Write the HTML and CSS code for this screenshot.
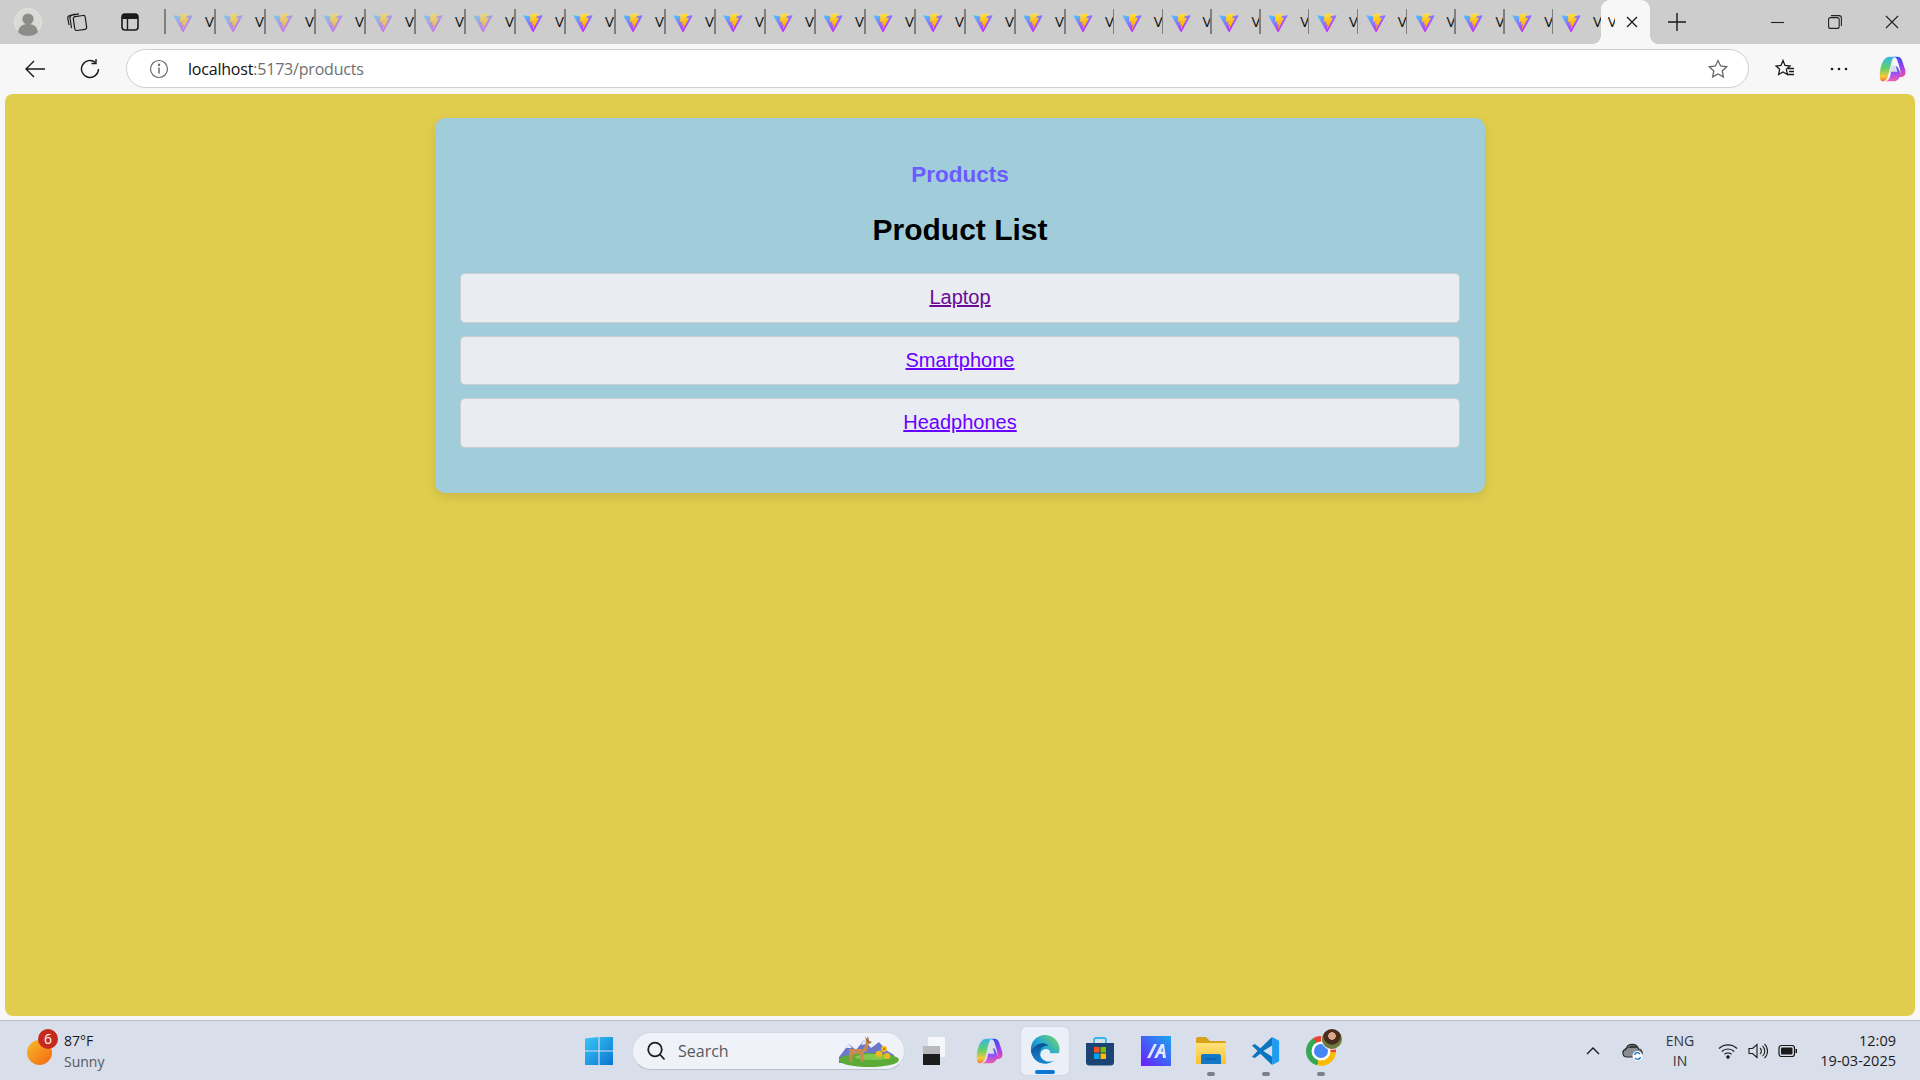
FILE: index.html
```html
<!DOCTYPE html>
<html lang="en">
<head>
<meta charset="utf-8">
<title>Products</title>
<link rel="stylesheet" href="styles.css">
</head>
<body>
<svg class="defs" aria-hidden="true">
  <defs>
    <linearGradient id="vg1" gradientUnits="userSpaceOnUse" x1="6" y1="33" x2="235" y2="344"><stop offset="0" stop-color="#41d1ff"/><stop offset="1" stop-color="#bd34fe"/></linearGradient>
    <linearGradient id="vg2" gradientUnits="userSpaceOnUse" x1="195" y1="9" x2="236" y2="293"><stop offset="0" stop-color="#ffea83"/><stop offset=".08" stop-color="#ffdd35"/><stop offset="1" stop-color="#ffa800"/></linearGradient>
    <linearGradient id="edgeA" x1="0" y1="1" x2="1" y2="0"><stop offset="0" stop-color="#0c59a4"/><stop offset=".5" stop-color="#1fa6d8"/><stop offset="1" stop-color="#7fdc5a"/></linearGradient>
    <linearGradient id="edgeB" x1="0" y1="0" x2="0" y2="1"><stop offset="0" stop-color="#0a4f94"/><stop offset="1" stop-color="#1b86d6"/></linearGradient>
    <linearGradient id="maG" x1="1" y1="0" x2="0" y2="1"><stop offset="0" stop-color="#1aa7ee"/><stop offset="1" stop-color="#6a1cff"/></linearGradient>
    <linearGradient id="winG" x1="0" y1="0" x2="1" y2="1"><stop offset="0" stop-color="#39c8f5"/><stop offset="1" stop-color="#0a74d1"/></linearGradient>
    <linearGradient id="coA" x1="0" y1="0" x2="0" y2="1"><stop offset="0" stop-color="#38b6e8"/><stop offset=".45" stop-color="#5fd06a"/><stop offset=".8" stop-color="#f7c93b"/><stop offset="1" stop-color="#f7762a"/></linearGradient>
    <linearGradient id="coB" x1="0" y1="0" x2="0" y2="1"><stop offset="0" stop-color="#3050f0"/><stop offset=".5" stop-color="#9a3ff0"/><stop offset="1" stop-color="#f04fa8"/></linearGradient>
    <linearGradient id="fold" x1="0" y1="0" x2="0" y2="1"><stop offset="0" stop-color="#ffe27a"/><stop offset="1" stop-color="#fbc02d"/></linearGradient>
    <linearGradient id="sky" x1="0" y1="0" x2="1" y2="0"><stop offset="0" stop-color="#2aa3f0"/><stop offset="1" stop-color="#1cb4f5"/></linearGradient>
    <symbol id="vite" viewBox="0 0 410 404">
      <path fill="url(#vg1)" d="M399.6 59.5 215.6 388.5c-3.8 6.8-13.5 6.8-17.4.1L10.6 59.6c-4.2-7.4 2.1-16.3 10.4-14.8l184.2 32.9c1.2.2 2.4.2 3.6 0l180.3-32.9c8.3-1.5 14.7 7.3 10.5 14.7Z"/>
      <path fill="url(#vg2)" d="M293 1.6 156.8 28.3c-2.2.4-3.9 2.3-4 4.6l-8.4 141.4c-.2 3.4 2.9 5.9 6.1 5.2l37.9-8.7c3.5-.8 6.8 2.3 6 5.9l-11.3 55.1c-.8 3.7 2.7 6.9 6.4 5.8l23.4-7.1c3.6-1.1 7.1 2.1 6.4 5.8l-17.9 86.6c-1.1 5.4 6.1 8.4 9.1 3.7l2-3.1 111-221.4c1.9-3.7-1.3-7.9-5.4-7.1l-39 7.5c-3.7.7-6.8-2.7-5.8-6.3l25.5-88.3c1-3.6-2.1-7-5.8-6.3Z"/>
    </symbol>
    <symbol id="copilot" viewBox="0 0 32 32">
      <path fill="url(#coA)" d="M12 2h7c-3 1-4 3-5 7l-3 12c-1 5-3 9-7 9-2 0-3-2-3-6 0-9 3-22 11-22Z"/>
      <path fill="url(#coB)" d="M21 2c3 0 5 2 6 6l3 9c1 5-1 8-5 8h-4c4-2 4-5 3-9l-2-7c-1-4-2-6-5-7h4Z"/>
      <path fill="url(#coB)" d="M14 13h7l3 6c1 5-1 11-8 11H7c4-1 5-3 6-7Z" opacity=".9"/>
      <path fill="#d8deea" d="M14 12h5l2 7h-7l-1 4c-.6-4 0-8 1-11Z"/>
    </symbol>
  </defs>
</svg>

<div class="screen">
  <header class="tabstrip">
    <div class="strip-left">
      <div class="slot slot-avatar">
        <svg class="ico-28" viewBox="0 0 28 28"><circle cx="14" cy="14" r="13.5" fill="#d9d9d5" stroke="#e4e4e0"/><circle cx="14" cy="11" r="5.6" fill="#8d8c88"/><path d="M4 24c1-6 5-8 10-8s9 2 10 8c-3 3-6 4-10 4s-7-1-10-4Z" fill="#8d8c88"/></svg>
      </div>
      <div class="slot slot-coll">
        <svg class="ico-22" viewBox="0 0 22 22" fill="none" stroke="#1a1a1a" stroke-width="1.2"><rect x="8" y="5" width="12" height="14" rx="2" transform="rotate(-8 14 12)"/><path d="M5.5 17 4 7c-.2-1.5.6-2.6 2-2.9l7-1.2M3 14 1.8 7.5C1.6 6 2.4 4.900 3.800 4.500L9 3"/></svg>
      </div>
      <div class="slot slot-vert">
        <svg class="ico-20" viewBox="0 0 20 20"><rect x="2" y="2" width="16" height="16" rx="3" fill="none" stroke="#1a1a1a" stroke-width="1.6"/><path d="M2 5a3 3 0 0 1 3-3h10a3 3 0 0 1 3 3v2H2Z" fill="#1a1a1a"/><path d="M7.500 7v11" stroke="#1a1a1a" stroke-width="1.4"/></svg>
      </div>
    </div>
    <div class="tabs">
      <div class="tab dim"><svg class="vite"><use href="#vite"/></svg><span class="tab-t">V</span></div>
      <div class="tab dim"><svg class="vite"><use href="#vite"/></svg><span class="tab-t">V</span></div>
      <div class="tab dim"><svg class="vite"><use href="#vite"/></svg><span class="tab-t">V</span></div>
      <div class="tab dim"><svg class="vite"><use href="#vite"/></svg><span class="tab-t">V</span></div>
      <div class="tab dim"><svg class="vite"><use href="#vite"/></svg><span class="tab-t">V</span></div>
      <div class="tab dim"><svg class="vite"><use href="#vite"/></svg><span class="tab-t">V</span></div>
      <div class="tab dim"><svg class="vite"><use href="#vite"/></svg><span class="tab-t">V</span></div>
      <div class="tab"><svg class="vite"><use href="#vite"/></svg><span class="tab-t">V</span></div>
      <div class="tab"><svg class="vite"><use href="#vite"/></svg><span class="tab-t">V</span></div>
      <div class="tab"><svg class="vite"><use href="#vite"/></svg><span class="tab-t">V</span></div>
      <div class="tab"><svg class="vite"><use href="#vite"/></svg><span class="tab-t">V</span></div>
      <div class="tab"><svg class="vite"><use href="#vite"/></svg><span class="tab-t">V</span></div>
      <div class="tab"><svg class="vite"><use href="#vite"/></svg><span class="tab-t">V</span></div>
      <div class="tab"><svg class="vite"><use href="#vite"/></svg><span class="tab-t">V</span></div>
      <div class="tab"><svg class="vite"><use href="#vite"/></svg><span class="tab-t">V</span></div>
      <div class="tab"><svg class="vite"><use href="#vite"/></svg><span class="tab-t">V</span></div>
      <div class="tab"><svg class="vite"><use href="#vite"/></svg><span class="tab-t">V</span></div>
      <div class="tab"><svg class="vite"><use href="#vite"/></svg><span class="tab-t">V</span></div>
      <div class="tab narrow"><svg class="vite"><use href="#vite"/></svg><span class="tab-t">V</span></div>
      <div class="tab narrow"><svg class="vite"><use href="#vite"/></svg><span class="tab-t">V</span></div>
      <div class="tab narrow"><svg class="vite"><use href="#vite"/></svg><span class="tab-t">V</span></div>
      <div class="tab narrow"><svg class="vite"><use href="#vite"/></svg><span class="tab-t">V</span></div>
      <div class="tab narrow"><svg class="vite"><use href="#vite"/></svg><span class="tab-t">V</span></div>
      <div class="tab narrow"><svg class="vite"><use href="#vite"/></svg><span class="tab-t">V</span></div>
      <div class="tab narrow"><svg class="vite"><use href="#vite"/></svg><span class="tab-t">V</span></div>
      <div class="tab narrow"><svg class="vite"><use href="#vite"/></svg><span class="tab-t">V</span></div>
      <div class="tab narrow"><svg class="vite"><use href="#vite"/></svg><span class="tab-t">V</span></div>
      <div class="tab narrow"><svg class="vite"><use href="#vite"/></svg><span class="tab-t">V</span></div>
      <div class="tab narrow last"><svg class="vite"><use href="#vite"/></svg><span class="tab-t">V</span></div>
      <div class="tab-active"><span class="tab-clip">V</span>
        <svg class="ico-12" viewBox="0 0 12 12" stroke="#1a1a1a" stroke-width="1.3"><path d="M1 1l10 10M11 1 1 11"/></svg>
      </div>
    </div>
    <div class="slot slot-new">
      <svg class="ico-18" viewBox="0 0 18 18" stroke="#1a1a1a" stroke-width="1.4"><path d="M9 0v18M0 9h18"/></svg>
    </div>
    <div class="win-controls">
      <div class="slot slot-win"><svg class="ico-14" viewBox="0 0 14 14" stroke="#222" stroke-width="1.100"><path d="M0 7.500h13"/></svg></div>
      <div class="slot slot-win"><svg class="ico-14" viewBox="0 0 14 14" fill="none" stroke="#222" stroke-width="1.100"><rect x=".6" y="2.600" width="10.600" height="10.800" rx="2"/><path d="M3 .6h8a2.400 2.400 0 0 1 2.400 2.400v8"/></svg></div>
      <div class="slot slot-win"><svg class="ico-14" viewBox="0 0 14 14" stroke="#222" stroke-width="1.100"><path d="M1 1l12 12M13 1 1 13"/></svg></div>
    </div>
  </header>

  <nav class="toolbar">
    <div class="slot slot-back">
      <svg class="ico-20" viewBox="0 0 20 20" fill="none" stroke="#1a1a1a" stroke-width="1.4"><path d="M20 10H1M9 2l-8 8 8 8"/></svg>
    </div>
    <div class="slot slot-reload">
      <svg class="ico-20" viewBox="0 0 20 20" fill="none" stroke="#1a1a1a" stroke-width="1.400"><path d="M15.500 3.500A8.500 8.500 0 1 0 18.500 10"/><path d="M16 0v4.500h-4.500"/></svg>
    </div>
    <div class="address">
      <svg class="ico-20 addr-info" viewBox="0 0 20 20" fill="none" stroke="#6a6a6a" stroke-width="1.200"><circle cx="10" cy="10" r="8.500"/><path d="M10 8.500v6" stroke-width="1.500"/><circle cx="10" cy="5.800" r=".6" fill="#6a6a6a"/></svg>
      <div class="url"><span class="url-host">localhost</span>:5173/products</div>
      <svg class="ico-20 addr-star" viewBox="0 0 20 20" fill="none" stroke="#6a6a6a" stroke-width="1.300"><path d="M10 1.500 12.600 7l6 .8-4.400 4.100 1.200 6L10 15l-5.400 2.900 1.200-6L1.400 7.800l6-.8Z"/></svg>
    </div>
    <div class="tool-right">
      <div class="slot slot-tool"><svg class="ico-20" viewBox="0 0 20 20" fill="none" stroke="#1a1a1a" stroke-width="1.300"><path d="M8 1.500 10 6.500l5 .5-3.600 3.300 1 5.200L8 13l-4.400 2.500 1-5.200L1 7l5-.5ZM13 9.500h6M14 12.500h5M12 15.500h7"/></svg></div>
      <div class="slot slot-tool"><svg class="ico-20" viewBox="0 0 20 20" fill="#1a1a1a"><circle cx="3" cy="10" r="1.300"/><circle cx="10" cy="10" r="1.300"/><circle cx="17" cy="10" r="1.300"/></svg></div>
      <div class="slot slot-tool"><svg class="ico-28" viewBox="0 0 32 32"><use href="#copilot"/></svg></div>
    </div>
  </nav>

  <main class="viewport">
    <div class="page">
      <section class="card">
        <div class="nav-title">Products</div>
        <h2 class="list-title">Product List</h2>
        <ul class="items">
          <li class="item"><a class="link link-visited" href="#">Laptop</a></li>
          <li class="item"><a class="link" href="#">Smartphone</a></li>
          <li class="item"><a class="link" href="#">Headphones</a></li>
        </ul>
      </section>
    </div>
  </main>

  <footer class="taskbar">
    <div class="weather">
      <div class="sun"><span class="badge">6</span></div>
      <div class="weather-text">
        <div class="temp">87°F</div>
        <div class="cond">Sunny</div>
      </div>
    </div>
    <div class="start">
      <svg class="ico-30" viewBox="0 0 30 30"><path fill="url(#winG)" d="M1 2.500 14.400 1v13.400H1ZM15.600 1 29 1v13.400H15.600ZM1 15.600h13.400V29H1ZM15.600 15.600H29V29H15.600Z"/></svg>
    </div>
    <div class="search">
      <svg class="ico-20" viewBox="0 0 20 20" fill="none" stroke="#1f1f1f" stroke-width="1.800"><circle cx="9" cy="8.500" r="6.800"/><path d="m14 13.500 4.500 5"/></svg>
      <span class="search-text">Search</span>
      <svg class="deer" viewBox="0 0 62 32">
        <path d="M2 22 12 9l7 6 8-10 7 8 8-6 7 8 8 5v8H2Z" fill="#6b78c9"/>
        <path d="M12 9l3 4h-6ZM27 5l3 4-6 1Z" fill="#e8ebf6"/>
        <ellipse cx="32" cy="25" rx="30" ry="7" fill="#5cab36"/>
        <ellipse cx="36" cy="22" rx="18" ry="3" fill="#83c84a"/>
        <path d="M12 14h14c2-3 3-5 3-9l3 1-1 6c0 3-2 5-4 5l-1 10h-2l-1-8-7 0-1 8h-2l-1-9Z" fill="#c58a56"/>
        <path d="M29 5l-1-4 2 3 1-3 1 5 3 1-3 2Z" fill="#a06c3c"/>
        <g fill="#f3b81b"><circle cx="42" cy="19" r="3.300"/><circle cx="47" cy="14" r="3"/><circle cx="50" cy="21" r="3"/></g>
        <circle cx="47" cy="14" r="1" fill="#b26a10"/>
      </svg>
    </div>
    <div class="slot task-first">
      <div class="taskview"><span class="tv-back"></span><span class="tv-front"></span></div>
    </div>
    <div class="slot task-slot"><svg class="ico-28" viewBox="0 0 32 32"><use href="#copilot"/></svg></div>
    <div class="slot task-slot">
      <div class="edge-tile">
        <svg class="ico-30" viewBox="0 0 32 32">
          <path fill="url(#edgeA)" d="M16 1C7 1 1 8 1 16c0 9 7 15.500 15 15.500 4 0 7-1 10-3-5 2-12 1-14.500-4-1.500-4 1-8.500 5.500-8.500 3.500 0 5 2.500 4.500 4.500h9c1-1 1-3 1-5C31 7 24 1 16 1Z"/>
          <path fill="url(#edgeB)" d="M1 16c0 9 7 15.500 15 15.500 1 0 2 0 3-.3-5-1-9-5-9-10 0-5 4-10 10-8.500-3-3-7.500-3.500-11-1.700C5 13 2.500 15 1 18.500Z"/>
        </svg>
        <span class="edge-bar"></span>
      </div>
    </div>
    <div class="slot task-slot">
      <svg class="ico-30" viewBox="0 0 30 30"><path d="M9 8V4a2 2 0 0 1 2-2h8a2 2 0 0 1 2 2v4" fill="none" stroke="#35b6ea" stroke-width="1.800"/><path d="M1 7h28v19a3.500 3.500 0 0 1-3.500 3.500h-21A3.500 3.500 0 0 1 1 26Z" fill="#1b4474"/><path fill="#f25022" d="M9 11h5.500v5.500H9Z"/><path fill="#7fba00" d="M15.500 11H21v5.500h-5.500Z"/><path fill="#00a4ef" d="M9 17.500h5.500V23H9Z"/><path fill="#ffb900" d="M15.500 17.500H21V23h-5.500Z"/></svg>
    </div>
    <div class="slot task-slot">
      <svg class="ico-30" viewBox="0 0 30 30"><rect width="30" height="30" fill="url(#maG)"/><path d="M6 22 13 8h3L9 22ZM13 22l7-14h3l2 14h-3l-.5-4H18l-2 4Zm7-6.500h2l-.5-4Z" fill="#dfe6ff"/></svg>
    </div>
    <div class="slot task-slot running">
      <svg class="ico-30" viewBox="0 0 30 30"><path d="M0 3a2 2 0 0 1 2-2h8l4 4h14a2 2 0 0 1 2 2v3H0Z" fill="#d9a21b"/><path d="M0 7h30v21H0Z" fill="url(#fold)"/><path d="M5 20a2 2 0 0 1 2-2h16a2 2 0 0 1 2 2v8H5Z" fill="#1278c8"/><path d="M9 23h12" stroke="#0a4f94" stroke-width="1"/></svg>
    </div>
    <div class="slot task-slot running">
      <svg class="ico-30" viewBox="0 0 32 32"><path d="M22.500 1 30 5v22l-7.500 4Z" fill="#1f9cf0"/><path d="M22.500 1 10 13 4 8.500 1 10l6 6-6 6 3 1.500L10 19l12.500 12v-9L13 16l9.500-6Z" fill="#0a76c2"/></svg>
    </div>
    <div class="slot task-slot running">
      <div class="chrome"><span class="chrome-dot"></span><span class="chrome-avatar"></span></div>
    </div>

    <div class="tray">
      <div class="slot tray-chev"><svg class="ico-14" viewBox="0 0 14 14" fill="none" stroke="#1a1a1a" stroke-width="1.400"><path d="M1 10l6-6 6 6"/></svg></div>
      <div class="slot tray-cloud">
        <svg class="ico-22" viewBox="0 0 22 22"><path d="M5 17a4 4 0 0 1-1-7.900A6.500 6.500 0 0 1 16.500 9 4 4 0 0 1 18 16.500L16 17Z" fill="#8a8d92" stroke="#2a2a2a" stroke-width="1.200"/><path d="M3 12a3 3 0 0 1 2-3 6.500 6.500 0 0 1 11-1H3Z" fill="#3a3a3c"/><circle cx="15.500" cy="16" r="5" fill="#fff"/><path d="M12.500 15a3 3 0 0 1 5.500-.8M18.500 17a3 3 0 0 1-5.500.8" fill="none" stroke="#0a78d4" stroke-width="1.300"/></svg>
      </div>
      <div class="lang"><div>ENG</div><div>IN</div></div>
      <div class="slot tray-ico"><svg class="ico-20" viewBox="0 0 20 20" fill="none" stroke="#1a1a1a" stroke-width="1.200"><path d="M1 7.500a13 13 0 0 1 18 0M3.800 10.500a9 9 0 0 1 12.400 0M6.500 13.300a5 5 0 0 1 7 0"/><circle cx="10" cy="16" r="1.200" fill="#1a1a1a"/></svg></div>
      <div class="slot tray-ico"><svg class="ico-20" viewBox="0 0 20 20" fill="none" stroke="#1a1a1a" stroke-width="1.100"><path d="M1 7.500h3.500L9 3.500v13l-4.500-4H1ZM12 7a4 4 0 0 1 0 6M14.500 4.800a7 7 0 0 1 0 10.400M16.500 2.800a10 10 0 0 1 0 14.400"/></svg></div>
      <div class="slot tray-ico"><svg class="ico-20" viewBox="0 0 20 20"><rect x="1" y="4.500" width="15.500" height="11" rx="2.500" fill="none" stroke="#1a1a1a" stroke-width="1.200"/><rect x="3" y="6.500" width="11.500" height="7" rx="1" fill="#1a1a1a"/><path d="M17.500 8h1.500v4h-1.500Z" fill="#1a1a1a"/></svg></div>
      <div class="clock"><div>12:09</div><div>19-03-2025</div></div>
    </div>
  </footer>
</div>
</body>
</html>
```

FILE: styles.css
```css
* { box-sizing: border-box; }
html, body { margin: 0; height: 100%; }
body { font-family: "Liberation Sans", Arial, sans-serif; background: #f7f7f7; overflow: hidden; }

.defs { position: absolute; width: 0; height: 0; }

.screen { display: flex; flex-direction: column; width: 1920px; height: 1080px; }

.slot { display: flex; align-items: center; justify-content: center; flex: none; }
.ico-12 { width: 12px; height: 12px; flex: none; }
.ico-14 { width: 14px; height: 14px; flex: none; }
.ico-18 { width: 18px; height: 18px; flex: none; }
.ico-20 { width: 20px; height: 20px; flex: none; }
.ico-22 { width: 22px; height: 22px; flex: none; }
.ico-28 { width: 28px; height: 28px; flex: none; }
.ico-30 { width: 30px; height: 30px; flex: none; }

/* tab strip */
.tabstrip { display: flex; height: 44px; background: #cdcdcd; flex: none; }
.strip-left { display: flex; width: 164px; flex: none; }
.slot-avatar { width: 56px; }
.slot-coll { width: 42px; }
.slot-vert { width: 64px; }
.tabs { display: flex; width: 1486px; flex: none; }
.tab { position: relative; display: flex; align-items: center; width: 50px; flex: none; padding-left: 9px; overflow: hidden; }
.tab.narrow { width: 48.800px; }
.tab::before { content: ""; position: absolute; left: 0; top: 9px; width: 1.500px; height: 25px; background: #7f7f7f; }
.vite { width: 20px; height: 20px; flex: none; margin-top: 1px; }
.tab.dim .vite { opacity: .55; }
.tab-t { margin-left: 12px; font: 15px/1 "Open Sans", sans-serif; color: #111; margin-top: -2px; }
.tab-active { position: relative; display: flex; align-items: center; width: 49px; flex: none; padding-left: 7px; background: #f7f7f7; border-radius: 9px 9px 0 0; }
.tab-active::before, .tab-active::after { content: ""; position: absolute; bottom: 0; width: 8px; height: 8px; }
.tab-active::before { left: -8px; background: radial-gradient(circle at 0 0, transparent 7.500px, #f7f7f7 8px); }
.tab-active::after { right: -8px; background: radial-gradient(circle at 100% 0, transparent 7.500px, #f7f7f7 8px); }
.tab-clip { width: 7px; overflow: hidden; font: 15px/1 "Open Sans", sans-serif; color: #111; margin-top: -2px; }
.tab-active .ico-12 { margin-left: 11px; }
.slot-new { width: 54px; }
.win-controls { display: flex; margin-left: auto; }
.slot-win { width: 57px; }

/* toolbar */
.toolbar { display: flex; align-items: center; height: 50px; padding-top: 0; background: #f7f7f7; flex: none; }
.slot-back { width: 54px; margin-left: 8px; }
.slot-reload { width: 56px; }
.address { display: flex; align-items: center; width: 1623px; height: 39px; margin-left: 8px; margin-bottom: 1px; padding: 0 20px 0 22px; background: #fff; border: 1px solid #cfcfcf; border-radius: 20px; flex: none; }
.url { margin-left: 19px; font: 16px/1 "Open Sans", sans-serif; color: #6f6f6f; letter-spacing: -.2px; }
.url-host { color: #111; }
.addr-star { margin-left: auto; }
.tool-right { display: flex; margin-left: 9px; }
.slot-tool { width: 54px; }

/* page */
.viewport { flex: 1; min-height: 0; padding: 0 5px 4px; background: #f7f7f7; }
.page { height: 100%; padding-top: 24px; background: #e0cd4e; border-radius: 8px; }
.card { width: 1050px; margin: 0 auto; padding: 44px 25px 45px; background: #a0cdd9; border-radius: 10px; box-shadow: 0 4px 10px rgba(0, 0, 0, .1); text-align: center; }
.nav-title { font-size: 22.500px; line-height: 26px; font-weight: 700; color: #6a5aff; margin-bottom: 24px; }
.list-title { margin: 0 0 26px; font-size: 30px; line-height: 35px; font-weight: 700; color: #000; }
.items { display: flex; flex-direction: column; gap: 13px; margin: 0; padding: 0; list-style: none; }
.item { height: 49.500px; padding: 12px 0; background: #e9ecf1; border: 1px solid #cbcfd2; border-radius: 5px; font-size: 20px; line-height: 23px; }
.link { color: #6a00ff; }
.link-visited { color: #6a0a95; }

/* taskbar */
.taskbar { display: flex; align-items: center; height: 60px; background: #d8deea; border-top: 1px solid #b9bdc6; flex: none; }
.weather { display: flex; align-items: center; width: 584px; padding-left: 27px; flex: none; }
.sun { position: relative; width: 25px; height: 25px; margin-top: 3px; border-radius: 50%; background: linear-gradient(135deg, #f6bb2c, #f4660f); flex: none; }
.badge { position: absolute; left: 11px; top: -11px; width: 20px; height: 20px; border-radius: 50%; background: #c42b1c; color: #fff; font: 14px/20px "Open Sans", sans-serif; text-align: center; }
.weather-text { margin-left: 12px; font: 14px/21px "Open Sans", sans-serif; }
.temp { color: #1a1a1a; }
.cond { color: #55585e; }
.start { display: flex; width: 30px; margin-right: 18px; flex: none; }
.search { display: flex; align-items: center; width: 273px; height: 38px; padding: 0 5px 0 13px; background: #eff2f8; border: 1px solid #d5d9e2; border-bottom-color: #b9bdc6; border-radius: 19px; flex: none; }
.search-text { margin-left: 12px; font: 16px/1 "Open Sans", sans-serif; color: #55585e; }
.deer { width: 62px; height: 32px; margin-left: auto; flex: none; }
.task-first { width: 57px; }
.task-slot { position: relative; width: 55.300px; height: 48px; }
.taskview { position: relative; width: 22px; height: 28px; }
.tv-back { position: absolute; left: 5px; top: 0; width: 17px; height: 20px; background: #f5f6f9; }
.tv-front { position: absolute; left: 0; top: 9px; width: 17px; height: 19px; background: linear-gradient(#b9b9bb 0 40%, #1c1c1c 40%); }
.edge-tile { position: relative; display: flex; align-items: center; justify-content: center; width: 48px; height: 48px; padding-bottom: 3px; background: #ebeff7; border-radius: 5px; box-shadow: 0 0 1px rgba(0, 0, 0, .25); }
.edge-bar { position: absolute; left: 14px; bottom: 1px; width: 20px; height: 4px; background: #0a78d4; border-radius: 2px; }
.running::after { content: ""; position: absolute; left: 50%; bottom: -1px; width: 8px; height: 4px; margin-left: -4px; background: #7b7f88; border-radius: 2px; }
.chrome { position: relative; width: 30px; height: 30px; border-radius: 50%; background: conic-gradient(#ea4335 0 120deg, #fbbc05 120deg 150deg, #fbbc05 150deg 210deg, #34a853 210deg 360deg); background: conic-gradient(from -30deg, #ea4335 0 125deg, #fbbc05 125deg 225deg, #34a853 225deg 360deg); }
.chrome-dot { position: absolute; left: 8px; top: 8px; width: 14px; height: 14px; border-radius: 50%; background: #4285f4; box-shadow: 0 0 0 2.500px #fff; }
.chrome-avatar { position: absolute; left: 16px; top: -7px; width: 20px; height: 20px; border-radius: 50%; background: radial-gradient(circle at 50% 35%, #d9a98c 0 22%, #4a2c1d 24% 50%, #6b7b3f 55%); box-shadow: 0 0 0 1px #dfe2ea; }
.tray { display: flex; align-items: center; margin-left: auto; }
.tray-chev { width: 36px; }
.tray-cloud { width: 44px; }
.lang { width: 50px; text-align: center; font: 14px/20px "Open Sans", sans-serif; color: #33363c; }
.tray-ico { width: 30px; }
.tray-ico:first-of-type { margin-left: 8px; }
.lang + .tray-ico { margin-left: 8px; }
.clock { width: 117px; padding-right: 24px; text-align: right; font: 14.500px/20px "Open Sans", sans-serif; color: #1a1a1a; }
```
